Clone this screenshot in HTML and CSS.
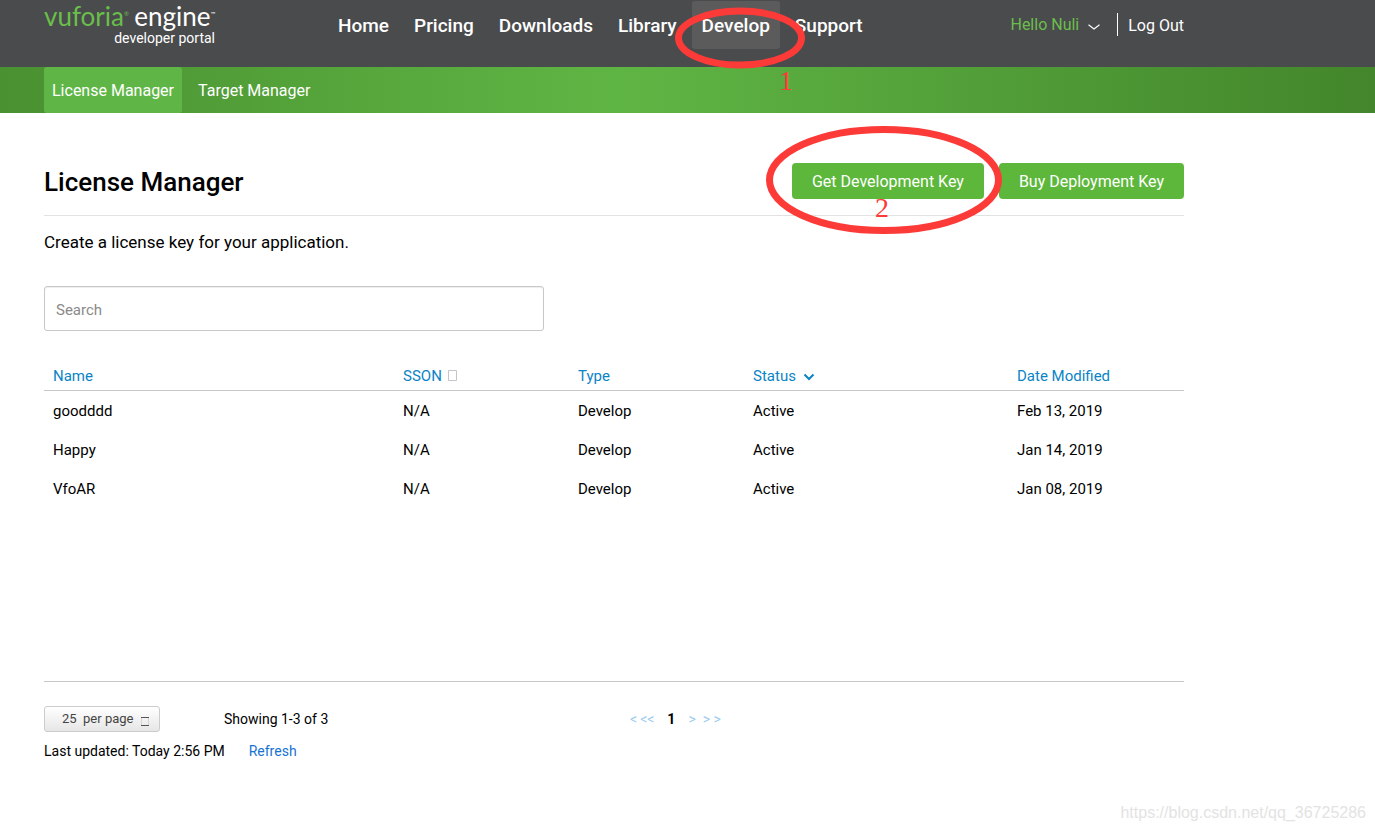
FILE: index.html
```html
<!DOCTYPE html>
<html lang="en">
<head>
<meta charset="utf-8">
<title>License Manager</title>
<link rel="stylesheet" href="styles.css">
</head>
<body>
<header class="topbar">
  <a class="logo" href="#">
    <span class="logo-main"><span class="logo-brand">vuforia<span class="mark">®</span></span> <span>engine<span class="mark">™</span></span></span>
    <span class="logo-sub">developer portal</span>
  </a>
  <nav class="main-nav">
    <a href="#">Home</a>
    <a href="#">Pricing</a>
    <a href="#">Downloads</a>
    <a href="#">Library</a>
    <a class="active" href="#">Develop</a>
    <a href="#">Support</a>
  </nav>
  <div class="account">
    <a class="hello" href="#">Hello Nuli
      <svg width="12" height="6" viewBox="0 0 12 6" aria-hidden="true"><path d="M.5.7 6 5 11.500.7" fill="none" stroke="#fff" stroke-width="1.100"/></svg>
    </a>
    <a class="logout" href="#">Log Out</a>
  </div>
</header>
<nav class="subnav">
  <a class="current" href="#">License Manager</a>
  <a href="#">Target Manager</a>
</nav>
<main class="content">
  <div class="title-row">
    <h1>License Manager</h1>
    <div class="actions">
      <button type="button">Get Development Key</button>
      <button type="button">Buy Deployment Key</button>
    </div>
  </div>
  <p class="intro">Create a license key for your application.</p>
  <input class="search" type="search" placeholder="Search" aria-label="Search">
  <div class="table-area">
    <table class="licenses">
      <colgroup><col class="c-name"><col class="c-mid"><col class="c-mid"><col class="c-status"><col></colgroup>
      <thead>
        <tr>
          <th>Name</th>
          <th>SSON <svg class="box" width="9" height="11" viewBox="0 0 9 11" aria-hidden="true"><path d="M.5.5h8v10h-8z" fill="none" stroke="#c3c5cc"/></svg></th>
          <th>Type</th>
          <th>Status <svg class="sort" width="12" height="8" viewBox="0 0 12 8" aria-hidden="true"><path d="M1.500 1.500 6 6l4.500-4.500" fill="none" stroke="#0a84c6" stroke-width="2"/></svg></th>
          <th>Date Modified</th>
        </tr>
      </thead>
      <tbody>
        <tr><td>goodddd</td><td>N/A</td><td>Develop</td><td>Active</td><td>Feb 13, 2019</td></tr>
        <tr><td>Happy</td><td>N/A</td><td>Develop</td><td>Active</td><td>Jan 14, 2019</td></tr>
        <tr><td>VfoAR</td><td>N/A</td><td>Develop</td><td>Active</td><td>Jan 08, 2019</td></tr>
      </tbody>
    </table>
  </div>
  <div class="pager-row">
    <div class="page-size">
      <select aria-label="Rows per page"><option>25 &nbsp;per page</option></select>
      <svg width="8" height="9" viewBox="0 0 8 9" aria-hidden="true"><path d="M.5 1v7M7.500 1v7" stroke="#d5d5d5"/><path d="M0 .5h8M0 8.500h8" stroke="#555"/></svg>
    </div>
    <span class="showing">Showing 1-3 of 3</span>
    <nav class="pager" aria-label="Pages">
      <a href="#">&lt;</a><a href="#">&lt;&lt;</a><b>1</b><a class="next" href="#">&gt;</a><a href="#">&gt; &gt;</a>
    </nav>
  </div>
  <div class="updated"><span>Last updated: Today 2:56 PM</span><a href="#">Refresh</a></div>
</main>
<svg class="ring ring-one" width="132" height="62" viewBox="0 0 132 62" aria-hidden="true"><ellipse cx="66" cy="31" rx="61.500" ry="27" fill="none" stroke="#fc3a38" stroke-width="7"/></svg>
<span class="note note-one">1</span>
<svg class="ring ring-two" width="238" height="110" viewBox="0 0 238 110" aria-hidden="true"><ellipse cx="119" cy="55" rx="114.500" ry="50.500" fill="none" stroke="#fc3a38" stroke-width="7"/></svg>
<span class="note note-two">2</span>
<span class="watermark">https://blog.csdn.net/qq_36725286</span>
</body>
</html>
```
FILE: styles.css
```css
* { box-sizing: border-box; }
body {
  margin: 0;
  position: relative;
  min-height: 100vh;
  background: #fff;
  color: #000;
  font: 15px/20px Roboto, "Liberation Sans", sans-serif;
}
a { text-decoration: none; color: inherit; }

.topbar, .subnav, .content { padding-left: 44px; padding-right: 191px; }
.topbar {
  display: flex;
  align-items: flex-start;
  height: 67px;
  background: #4a4b4d;
  color: #fff;
}
.logo { display: flex; flex-direction: column; width: 171px; padding-top: 1px; }
.logo-main {
  display: flex;
  justify-content: space-between;
  font: 26px/26px Lato, sans-serif;
}
.logo-brand { color: #6abf4b; }
.mark { font-size: 6px; vertical-align: 10px; }
.logo-sub { align-self: flex-end; font-size: 14px; line-height: 18px; }
.main-nav { display: flex; gap: 5px; margin-left: 113px; padding-top: 1px; }
.main-nav a {
  padding: 1px 10px 0;
  border-radius: 3px;
  font-size: 19px;
  font-weight: 500;
  line-height: 47px;
}
.main-nav .active { background: #5b5b5c; }
.account { display: flex; align-items: center; margin-left: auto; padding-top: 13px; font-size: 16px; }
.hello { color: #6abf4b; padding-right: 17px; }
.hello svg { margin-left: 5px; }
.logout { border-left: 1px solid #fff; padding: 2px 0 0 10px; line-height: 21px; }

.subnav {
  display: flex;
  gap: 8px;
  background: linear-gradient(90deg, #4a9131, #5fb544 45%, #43862b);
  color: #fff;
  font-size: 16px;
  line-height: 44px;
}
.subnav a { padding: 2px 8px 0; border-radius: 3px; }
.subnav .current { background: #5fb646; }

.title-row {
  display: flex;
  justify-content: space-between;
  align-items: center;
  padding: 50px 0 16px;
  border-bottom: 1px solid #e2e2e2;
}
h1 { margin: 0; padding-top: 2px; font-size: 26px; line-height: 34px; font-weight: 500; }
.actions { display: flex; gap: 15px; }
.actions button {
  height: 36px;
  padding: 2px 20px 0;
  border: 0;
  border-radius: 4px;
  background: #5cb73b;
  color: #fff;
  font: 16px/34px Roboto, sans-serif;
}
.intro { margin: 14px 0 32px; font-size: 17px; line-height: 24px; }
.search {
  display: block;
  width: 500px;
  height: 45px;
  padding: 2px 11px 0;
  border: 1px solid #c8c8c8;
  border-radius: 3px;
  box-shadow: inset 0 1px 1px #eee;
  font: 15px/20px Roboto, sans-serif;
}
.search::placeholder { color: #8a8a8a; opacity: 1; }

.table-area { min-height: 322px; margin-top: 29px; border-bottom: 1px solid #c8c8c8; }
.licenses { width: 100%; table-layout: fixed; border-collapse: collapse; }
.c-name { width: 350px; }
.c-mid { width: 175px; }
.c-status { width: 264px; }
th, td { padding: 3px 9px 0; text-align: left; font-weight: 400; }
th { height: 30px; color: #0a84c6; border-bottom: 1px solid #c8c8c8; }
td { height: 39px; }
.box { margin-left: 2px; }
.sort { margin-left: 3px; }

.pager-row { display: flex; align-items: center; height: 26px; margin-top: 24px; font-size: 14px; }
.page-size { display: grid; width: 116px; }
.page-size > * { grid-area: 1 / 1; }
.page-size select {
  appearance: none;
  height: 26px;
  padding: 0 17px;
  border: 1px solid #ccc;
  border-radius: 3px;
  background: linear-gradient(#fff, #e6e6e6);
  color: #444;
  font: 13px/20px Roboto, sans-serif;
}
.page-size svg { place-self: center end; margin: 4px 11px 0 0; pointer-events: none; }
.showing { width: 449px; padding-left: 64px; }
.pager { display: flex; align-items: center; padding-left: 21px; color: #9dcbf0; gap: 3px; }
.pager b { padding: 0 10px; color: #000; }
.pager .next { padding-right: 4px; }
.updated { display: flex; gap: 24px; margin-top: 9px; font-size: 14px; }
.updated a { color: #1673d1; }

/* Tutorial annotations drawn over the page */
.ring, .note, .watermark { position: absolute; pointer-events: none; }
.ring-one { left: 674px; top: 7px; }
.ring-two { left: 765px; top: 125px; }
.note { color: #fc3a38; font: 28px/28px "Liberation Serif", serif; }
.note-one { left: 779px; top: 67px; }
.note-two { left: 875px; top: 194px; }
.watermark {
  right: 9px;
  bottom: 8px;
  color: #e3e3e3;
  font: 16px/20px "Liberation Sans", sans-serif;
}
```
